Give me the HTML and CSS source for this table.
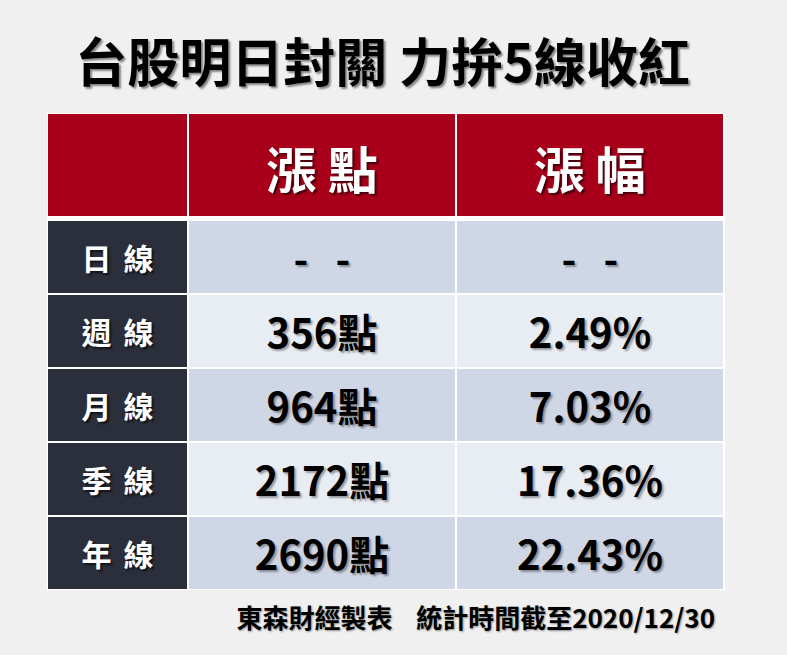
FILE: index.html
```html
<!DOCTYPE html>
<html lang="zh-Hant">
<head>
<meta charset="utf-8">
<title>台股明日封關 力拚5線收紅</title>
<link rel="stylesheet" href="styles.css">
</head>
<body>
<main class="page">
  <h1 class="title">台股明日封關 力拚5線收紅</h1>
  <div class="table">
    <div class="cell head"></div>
    <div class="cell head">漲 點</div>
    <div class="cell head">漲 幅</div>

    <div class="cell label">日 線</div>
    <div class="cell val odd">-&nbsp;&nbsp;&nbsp;-</div>
    <div class="cell val odd">-&nbsp;&nbsp;&nbsp;-</div>

    <div class="cell label">週 線</div>
    <div class="cell val even">356點</div>
    <div class="cell val even">2.49%</div>

    <div class="cell label">月 線</div>
    <div class="cell val odd">964點</div>
    <div class="cell val odd">7.03%</div>

    <div class="cell label">季 線</div>
    <div class="cell val even">2172點</div>
    <div class="cell val even">17.36%</div>

    <div class="cell label">年 線</div>
    <div class="cell val odd">2690點</div>
    <div class="cell val odd">22.43%</div>
  </div>
  <p class="note">東森財經製表&nbsp;&nbsp;&nbsp;&nbsp;統計時間截至2020/12/30</p>
</main>
</body>
</html>
```

FILE: styles.css
```css
html, body {
  margin: 0;
  padding: 0;
  background: #f0f0f0;
}

.page {
  width: 787px;
  height: 655px;
  font-family: "Noto Sans CJK TC", "Noto Sans", sans-serif;
  overflow: hidden;
}

.title {
  margin: 0;
  padding: 29px 22px 0 0;
  font-size: 52px;
  line-height: 62px;
  font-weight: 700;
  color: #000;
  text-align: center;
  text-shadow: 2px 2px 2px rgba(0, 0, 0, 0.45);
}

.table {
  margin: 22px 0 0 47px;
  width: 678px;
  box-sizing: border-box;
  padding: 1px;
  background: #ffffff;
  display: grid;
  grid-template-columns: 139px 266px 266px;
  grid-template-rows: 105px repeat(5, 72px);
  gap: 2px;
}

.cell {
  display: flex;
  align-items: center;
  justify-content: center;
  font-weight: 700;
}

.head {
  background: #a8001a;
  margin-bottom: 3px;
  color: #fff;
  font-size: 50px;
  padding-top: 4px;
  text-shadow: 2px 2px 2px rgba(0, 0, 0, 0.6);
}

.label {
  background: #2b2f3b;
  color: #fff;
  font-size: 30px;
  word-spacing: 5px;
  text-shadow: 2px 2px 2px rgba(0, 0, 0, 0.6);
}

.val {
  color: #000;
  font-size: 40px;
  text-shadow: 2px 2px 2px rgba(0, 0, 0, 0.35);
}

.odd {
  background: #cfd6e6;
}

.even {
  background: #e8ecf3;
}

.note {
  margin: 9px 0 0;
  padding-right: 72px;
  text-align: right;
  font-size: 26px;
  line-height: 36px;
  font-weight: 700;
  color: #000;
  text-shadow: 1px 1px 2px rgba(0, 0, 0, 0.4);
}
```
